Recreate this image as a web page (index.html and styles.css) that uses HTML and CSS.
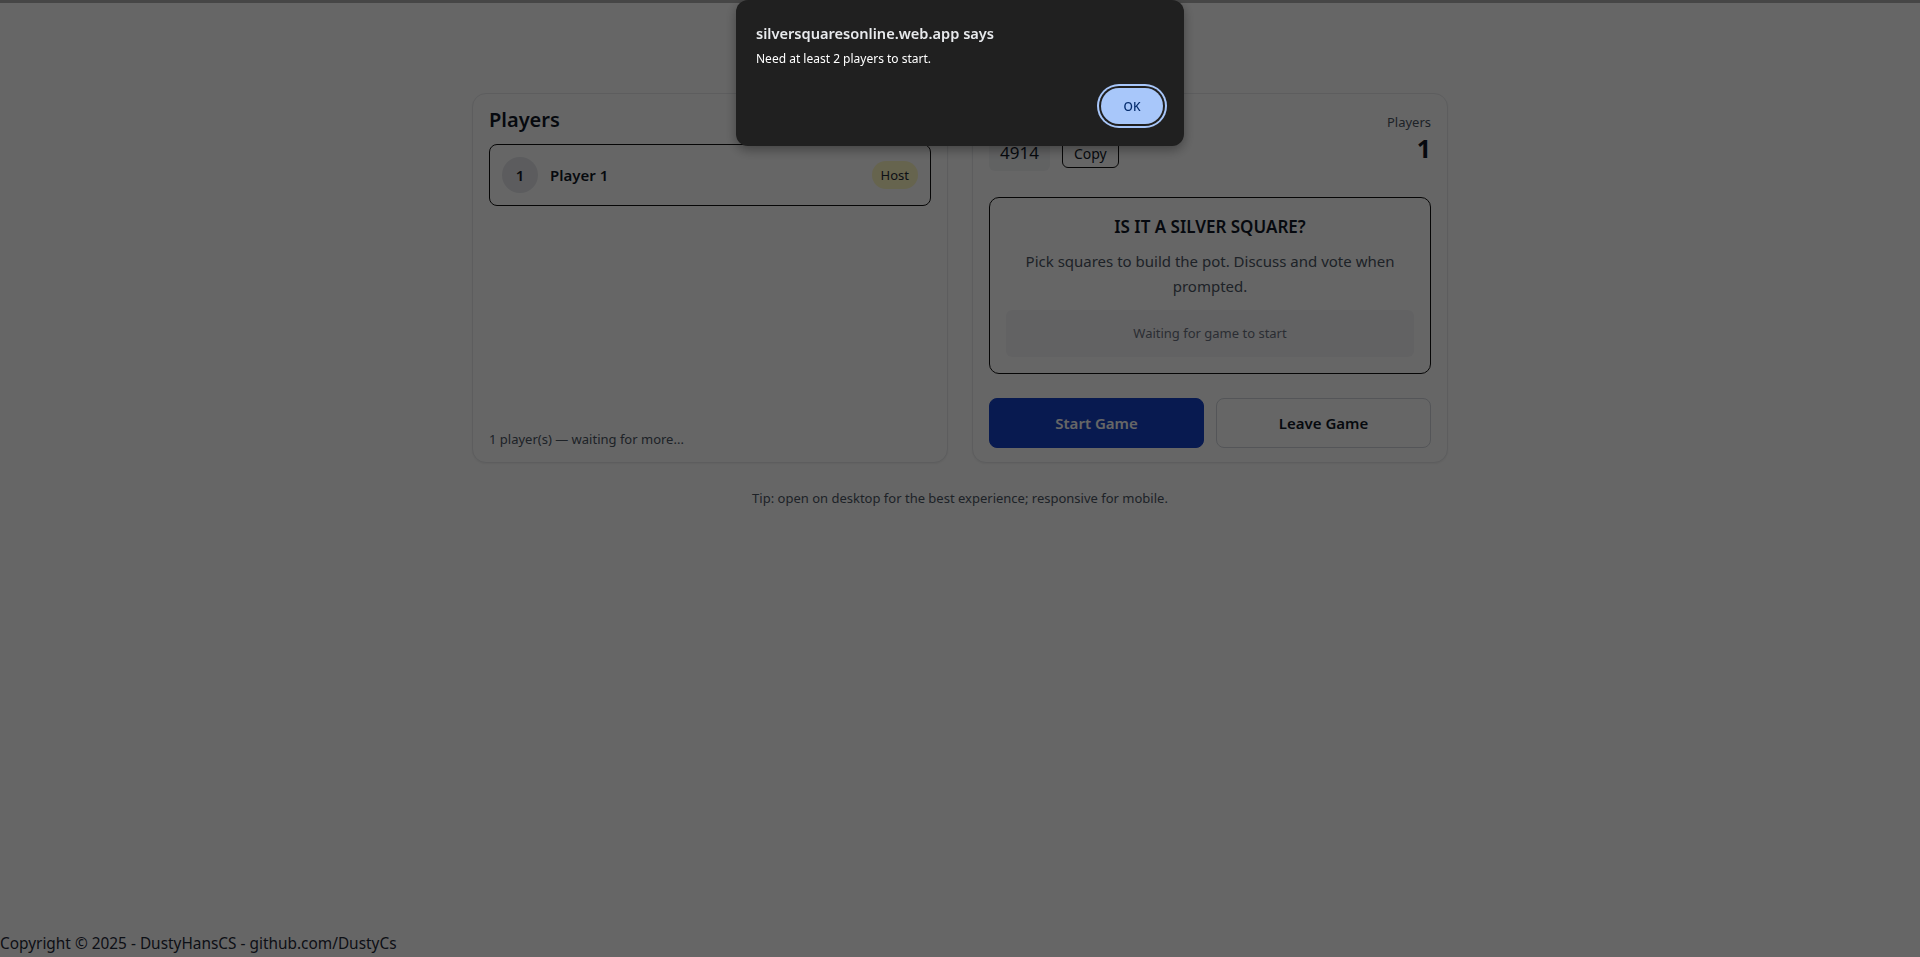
FILE: index.html
```html
<!DOCTYPE html>
<html lang="en">
<head>
<meta charset="utf-8">
<title>Silver Squares Online</title>
<link rel="stylesheet" href="styles.css">
</head>
<body>
<div class="topbar"></div>
<main class="page">
  <div class="grid">
    <section class="card players-card">
      <h2 class="card-title">Players</h2>
      <ul class="player-list">
        <li class="player-row">
          <span class="avatar">1</span>
          <span class="player-name">Player 1</span>
          <span class="badge">Host</span>
        </li>
      </ul>
      <p class="card-foot">1 player(s) — waiting for more...</p>
    </section>
    <section class="card game-card">
      <div class="room-row">
        <div class="room-left">
          <div class="label">Room Code</div>
          <div class="code-line">
            <span class="code">4914</span>
            <button class="copy-btn">Copy</button>
          </div>
        </div>
        <div class="room-right">
          <div class="label">Players</div>
          <div class="count">1</div>
        </div>
      </div>
      <div class="game-box">
        <h3 class="game-title">IS IT A SILVER SQUARE?</h3>
        <p class="game-desc">Pick squares to build the pot. Discuss and vote when prompted.</p>
        <div class="waiting">Waiting for game to start</div>
      </div>
      <div class="actions">
        <button class="btn btn-primary">Start Game</button>
        <button class="btn btn-outline">Leave Game</button>
      </div>
    </section>
  </div>
  <p class="tip">Tip: open on desktop for the best experience; responsive for mobile.</p>
</main>
<footer class="copyright">Copyright © 2025 - DustyHansCS - github.com/DustyCs</footer>

<div class="overlay"></div>
<div class="dialog" role="alertdialog">
  <div class="dialog-title">silversquaresonline.web.app says</div>
  <div class="dialog-msg">Need at least 2 players to start.</div>
  <div class="dialog-actions">
    <button class="dialog-ok">OK</button>
  </div>
</div>
</body>
</html>
```

FILE: styles.css
```css
* { box-sizing: border-box; }
html, body { margin: 0; padding: 0; }
body {
  font-family: "Noto Sans", "Open Sans", "Liberation Sans", sans-serif;
  background: #ffffff;
  color: #111827;
  min-height: 100vh;
  display: flex;
  flex-direction: column;
}
.topbar { height: 3px; background: #b0b0b0; }
.page {
  flex: 1;
  width: 976px;
  margin: 0 auto;
  padding-top: 90px;
}
.grid {
  display: grid;
  grid-template-columns: 1fr 1fr;
  gap: 24px;
}
.card {
  background: #ffffff;
  border: 1px solid #e8e9ec;
  border-radius: 14px;
  box-shadow: 0 1px 2px rgba(0,0,0,0.06);
  padding: 12px 16px 14px;
}
.players-card { display: flex; flex-direction: column; }
.card-title {
  margin: 2px 0 12px;
  font-size: 20px;
  line-height: 24px;
  font-weight: 600;
  color: #111827;
}
.player-list { list-style: none; margin: 0; padding: 0; flex: 1; }
.player-row {
  display: flex;
  align-items: center;
  gap: 12px;
  border: 1px solid #111;
  border-radius: 8px;
  padding: 12px;
}
.avatar {
  width: 36px; height: 36px;
  border-radius: 50%;
  background: #e5e7eb;
  display: flex; align-items: center; justify-content: center;
  font-size: 15px; font-weight: 600;
}
.player-name { flex: 1; font-size: 15px; font-weight: 600; }
.badge {
  background: #fef9c3;
  border-radius: 14px;
  height: 28px;
  padding: 0 9px;
  display: flex; align-items: center;
  font-size: 13px;
  color: #1f2937;
}
.card-foot {
  margin: 0;
  font-size: 13px;
  line-height: 18px;
  color: #4b5563;
}
.room-row {
  display: flex;
  justify-content: space-between;
  align-items: flex-start;
  padding-top: 6px;
  margin-bottom: 26px;
}
.label { font-size: 13px; line-height: 20px; color: #4b5563; }
.room-right { text-align: right; }
.count { font-size: 25px; line-height: 32px; font-weight: 700; }
.code-line { display: flex; align-items: center; gap: 12px; margin-top: 3px; }
.code {
  background: #f3f4f6;
  border-radius: 6px;
  padding: 6px 11px;
  font-size: 17px;
  line-height: 24px;
}
.copy-btn {
  font-family: inherit;
  background: #ffffff;
  border: 1px solid #111;
  border-radius: 6px;
  height: 30px;
  padding: 0 11px;
  font-size: 14px;
  color: #111827;
}
.game-box {
  border: 1px solid #111;
  border-radius: 10px;
  padding: 16px;
  text-align: center;
}
.game-title {
  margin: 0;
  font-size: 17px;
  line-height: 26px;
  font-weight: 600;
}
.game-desc {
  margin: 9px 0 11px;
  font-size: 15px;
  line-height: 25px;
  color: #4b5563;
}
.waiting {
  background: #f6f6f7;
  border-radius: 6px;
  padding: 13px 0;
  font-size: 13px;
  line-height: 21px;
  color: #6b7280;
}
.actions {
  display: grid;
  grid-template-columns: 1fr 1fr;
  gap: 12px;
  margin-top: 24px;
}
.btn {
  font-family: inherit;
  height: 50px;
  border-radius: 8px;
  font-size: 15px;
  font-weight: 600;
}
.btn-primary { background: #1541c8; border: 1px solid #1541c8; color: #ffffff; }
.btn-outline { background: #ffffff; border: 1px solid #d1d5db; color: #111827; }
.tip {
  margin: 26px 0 0;
  text-align: center;
  font-size: 13px;
  line-height: 18px;
  color: #4b5563;
}
.copyright {
  font-size: 15.4px;
  line-height: 24px;
  color: #1f2937;
  margin-bottom: 1px;
}
.overlay {
  position: fixed;
  inset: 0;
  background: rgba(0,0,0,0.6);
}
.dialog {
  position: fixed;
  top: 0;
  left: 736px;
  width: 448px;
  height: 146px;
  background: #202020;
  border-radius: 12px;
  box-shadow: 0 4px 12px rgba(0,0,0,0.35);
  padding: 21px 16px 0 20px;
  font-family: "Noto Sans", "Open Sans", sans-serif;
}
.dialog-title {
  font-size: 14.6px;
  line-height: 24px;
  font-weight: 600;
  color: #e8eaed;
}
.dialog-msg {
  margin-top: 5px;
  font-size: 12px;
  line-height: 18px;
  color: #ffffff;
}
.dialog-actions { display: flex; justify-content: flex-end; margin-top: 20px; }
.dialog-ok {
  font-family: inherit;
  width: 62px;
  height: 36px;
  border: none;
  border-radius: 18px;
  background: #a8c7fa;
  color: #062e6f;
  font-size: 12px;
  font-weight: 500;
  box-shadow: 0 0 0 2px #202020, 0 0 0 4px #a8c7fa;
  margin-right: 5px;
}
```
